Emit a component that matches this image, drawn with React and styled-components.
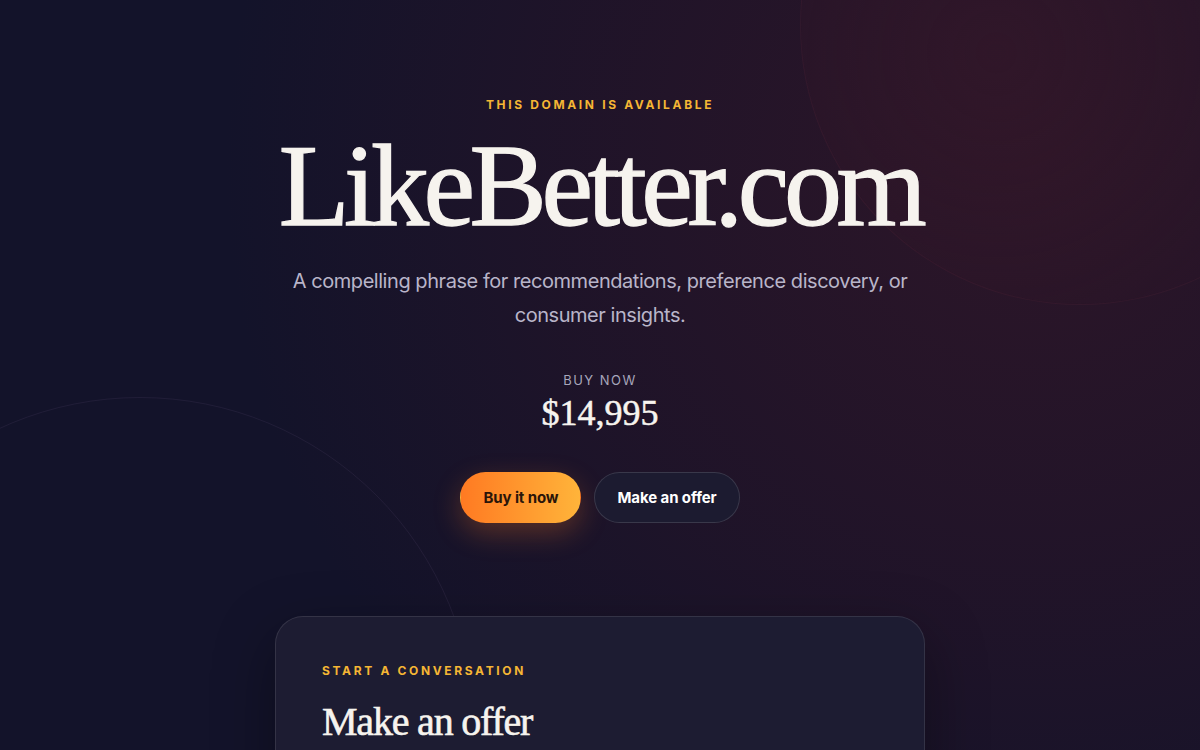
import styled, { createGlobalStyle } from "styled-components";

const GlobalStyle = createGlobalStyle`
  html, body {
    margin: 0;
    padding: 0;
    background: #13132a;
  }
  * {
    box-sizing: border-box;
  }
`;

const App = () => {
  return (
    <>
      <GlobalStyle />
      <Page>
        <GlowCircle />
        <RingCircle />
        <Hero>
          <Eyebrow>This domain is available</Eyebrow>
          <Domain>LikeBetter.com</Domain>
          <Lead>
            A compelling phrase for recommendations, preference discovery, or
            consumer insights.
          </Lead>
          <PriceBlock>
            <PriceLabel>Buy now</PriceLabel>
            <Price>$14,995</Price>
          </PriceBlock>
          <Actions>
            <Button primary>Buy it now</Button>
            <Button>Make an offer</Button>
          </Actions>
        </Hero>
        <Card>
          <Eyebrow left>Start a conversation</Eyebrow>
          <CardTitle>Make an offer</CardTitle>
        </Card>
      </Page>
    </>
  );
};

const Page = styled.div`
  position: relative;
  height: 750px;
  overflow: hidden;
  padding-top: 98px;
  display: flex;
  flex-direction: column;
  align-items: center;
  font-family: Inter, "Liberation Sans", sans-serif;
  background:
    radial-gradient(circle at 86% 22%, rgba(46, 22, 40, 0.95) 0, rgba(38, 20, 40, 0.7) 36%, rgba(19, 19, 42, 0) 68%),
    #13132a;
`;

const GlowCircle = styled.div`
  position: absolute;
  left: 800px;
  top: -255px;
  width: 560px;
  height: 560px;
  border-radius: 50%;
  background: radial-gradient(circle at 35% 55%, rgba(54, 24, 42, 0.55), rgba(46, 22, 40, 0.25) 60%, rgba(44, 22, 40, 0.12));
  border: 1px solid rgba(90, 40, 60, 0.2);
  pointer-events: none;
`;

const RingCircle = styled.div`
  position: absolute;
  left: -195px;
  top: 397px;
  width: 670px;
  height: 670px;
  border-radius: 50%;
  border: 1px solid rgba(120, 100, 150, 0.13);
  pointer-events: none;
`;

const Hero = styled.section`
  position: relative;
  display: flex;
  flex-direction: column;
  align-items: center;
  text-align: center;
`;

const Eyebrow = styled.div`
  font-family: Inter, "Liberation Sans", sans-serif;
  font-size: 12px;
  font-weight: 700;
  letter-spacing: 2.65px;
  text-transform: uppercase;
  color: #f5b634;
  line-height: 14px;
  align-self: ${(p) => (p.left ? "flex-start" : "center")};
`;

const Domain = styled.h1`
  margin: 16px 0 0;
  font-family: "Liberation Serif", "DejaVu Serif", serif;
  font-weight: 400;
  font-size: 116px;
  line-height: 1;
  letter-spacing: -5.4px;
  color: #f6f3ee;
  -webkit-text-stroke: 1.3px #f6f3ee;
`;

const Lead = styled.p`
  margin: 20px 0 0;
  max-width: 640px;
  font-size: 20px;
  line-height: 34px;
  letter-spacing: -0.45px;
  color: #b9b5c9;
`;

const PriceBlock = styled.div`
  margin-top: 40px;
  display: flex;
  flex-direction: column;
  align-items: center;
`;

const PriceLabel = styled.div`
  font-size: 13px;
  letter-spacing: 1.5px;
  text-transform: uppercase;
  color: #a7a6bb;
`;

const Price = styled.div`
  margin-top: 5px;
  font-family: "Liberation Serif", serif;
  font-size: 36px;
  line-height: 40px;
  color: #f7f4ef;
  -webkit-text-stroke: 0.5px #f7f4ef;
`;

const Actions = styled.div`
  margin-top: 39px;
  display: flex;
  gap: 13px;
`;

const Button = styled.button`
  height: 51px;
  padding: 0 22px;
  border-radius: 26px;
  font-family: Inter, "Liberation Sans", sans-serif;
  font-size: 15px;
  font-weight: 700;
  letter-spacing: -0.1px;
  cursor: pointer;
  color: ${(p) => (p.primary ? "#2a1509" : "#ffffff")};
  background: ${(p) =>
    p.primary ? "linear-gradient(90deg, #ff7a22, #ffb43a)" : "#1c1b30"};
  border: 1px solid ${(p) => (p.primary ? "transparent" : "rgba(255,255,255,0.13)")};
  box-shadow: ${(p) =>
    p.primary ? "0 10px 28px rgba(255, 122, 34, 0.28)" : "none"};
`;

const Card = styled.section`
  position: relative;
  flex-shrink: 0;
  margin-top: 93px;
  width: 650px;
  height: 200px;
  padding: 47px 46px;
  border-radius: 28px;
  background: #1d1c32;
  border: 1px solid rgba(255, 255, 255, 0.1);
  box-shadow: 0 20px 60px rgba(0, 0, 0, 0.35);
  display: flex;
  flex-direction: column;
`;

const CardTitle = styled.h2`
  margin: 22px 0 0;
  font-family: "Liberation Serif", serif;
  font-weight: 400;
  font-size: 40px;
  line-height: 44px;
  letter-spacing: -1.2px;
  color: #f6f3ee;
  -webkit-text-stroke: 0.6px #f6f3ee;
`;

export default App;
